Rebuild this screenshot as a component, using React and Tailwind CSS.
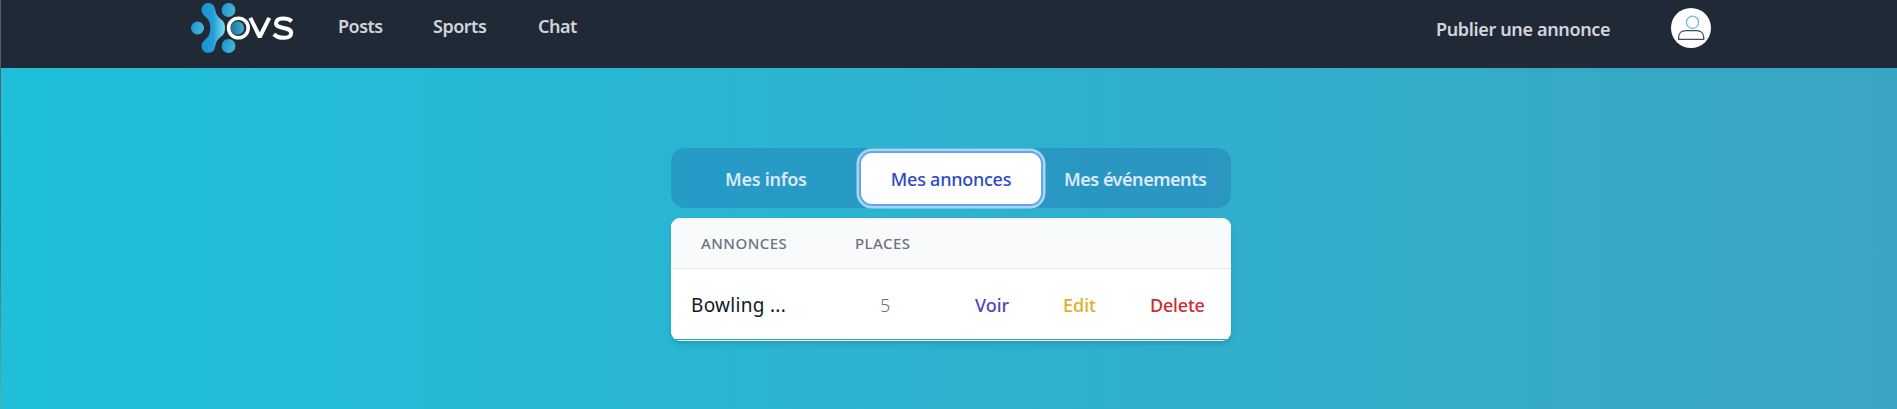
function Logo() {
  return (
    <svg className="block h-14 w-[110px]" viewBox="0 0 110 56">
      <defs>
        <linearGradient id="blue" x1="0" y1="0" x2="1" y2="0.3">
          <stop offset="0" stopColor="#1b93cf" />
          <stop offset="1" stopColor="#43b4d8" />
        </linearGradient>
        <linearGradient id="teal" x1="0" y1="0" x2="1" y2="0">
          <stop offset="0" stopColor="#1f6f9c" />
          <stop offset="1" stopColor="#3fb0cc" />
        </linearGradient>
        <linearGradient id="body" x1="0" y1="0" x2="1" y2="0">
          <stop offset="0" stopColor="#1c8fd0" />
          <stop offset="0.5" stopColor="#249fd6" />
          <stop offset="1" stopColor="#7fdcec" />
        </linearGradient>
      </defs>
      <circle cx="7.5" cy="28" r="6.5" fill="url(#blue)" />
      <circle cx="38.5" cy="10" r="6.9" fill="url(#blue)" />
      <circle cx="38.5" cy="46" r="6.9" fill="url(#blue)" />
      <path
        d="M11.5 10C11.5 2 22 .8 24.5 7C26 12 26 15 29.5 18C34 21 35 24 35 28C35 32 34 35 29.5 38C26 41 26 44 24.5 49C22 55 11.5 54 11.5 46C11.5 41 16 40 18.5 36C21 31 21 25 18.5 20C16 16 11.5 15 11.5 10Z"
        fill="url(#body)"
      />
      <circle cx="47.3" cy="28" r="6.8" fill="url(#teal)" />
      <circle cx="48.4" cy="28" r="9.8" fill="none" stroke="#fff" strokeWidth="3.6" />
      <path d="M60.3 17.8L69.7 37L79.3 17.8" fill="none" stroke="#fff" strokeWidth="4" strokeLinejoin="bevel" />
      <path
        d="M101.8 21.2C98 18 86.4 16.6 86 23.3C86 29.8 101.2 26 101.2 33C101 39.6 88.5 38.8 83.8 34.2"
        fill="none"
        stroke="#fff"
        strokeWidth="4"
      />
    </svg>
  );
}

function Avatar() {
  return (
    <svg className="block size-10" viewBox="0 0 40 40" fill="none">
      <circle cx="20" cy="20" r="20" fill="#fff" />
      <circle cx="21.5" cy="14.3" r="6.1" stroke="#6dbdd3" strokeWidth="1.3" />
      <path d="M7.6 31.4V29.5C7.6 25 11 22.6 15 22.6H25.5C30 22.6 32.7 25.5 32.7 29.5V31.4Z" stroke="#4d4a68" strokeWidth="1.3" />
    </svg>
  );
}

export default function App() {
  return (
    <div className="flex h-[409px] overflow-hidden font-['Noto_Sans','Open_Sans',sans-serif] text-[18px] leading-7">
      <div className="w-px shrink-0 bg-linear-to-b from-[#52665f] via-[#2e7266] to-[#55b39d]" />
      <div className="grow bg-linear-to-r/srgb from-[#1fbfdc] to-[#3aa5c3]">
        <header className="flex h-[68px] bg-[#202a37] pl-[189px] font-semibold text-[#d1d5db]">
          <Logo />
          <nav className="flex pt-3 tracking-[-0.5px]">
            <a className="ml-[38px] w-[95px]">Posts</a>
            <a className="w-[105px]">Sports</a>
            <a>Chat</a>
          </nav>
          <a className="ml-auto w-[235px] pt-[15px] tracking-[-0.35px] whitespace-nowrap">Publier une annonce</a>
          <div className="mr-[186px] pt-2">
            <Avatar />
          </div>
        </header>

        <main className="mt-20 ml-[670px] w-[560px]">
          <div className="grid h-[60px] grid-cols-3 gap-[4.5px] rounded-[14px] bg-[#2272b4]/40 p-[4.5px] text-center text-[#dbeafe]">
            <button className="pt-0.5 font-semibold tracking-[-0.25px]">Mes infos</button>
            <button className="rounded-[11px] bg-white pt-0.5 font-medium tracking-[-0.25px] text-[#2b4bc4] shadow-[0_0_0_2px_#60a5fa,0_0_0_4.5px_#a9d6ef]">
              Mes annonces
            </button>
            <button className="pt-0.5 pr-0.5 font-semibold tracking-[-0.45px] whitespace-nowrap">Mes événements</button>
          </div>
          <section className="mt-2.5 h-[123px] overflow-hidden rounded-[9px] bg-white shadow-md">
            <div className="flex h-[51px] items-center border-b border-[#e5e7eb] bg-[#f9fafb] pl-[30px] text-[15px] font-medium tracking-[0.45px] text-[#6b7280]">
              <span className="w-[154px]">ANNONCES</span>
              <span>PLACES</span>
            </div>
            <div className="flex h-[71px] items-center border-b border-[#2e9fb5] pt-0.5 font-medium">
              <span className="w-[189px] pl-5 text-[19px] font-normal tracking-[0.3px] text-[#111827]">Bowling ...</span>
              <span className="w-[115px] pl-5 font-light text-[#6b7280]">5</span>
              <a className="w-[88px] text-[#4f46c5]">Voir</a>
              <a className="w-[87px] text-[#e0b02a]">Edit</a>
              <a className="tracking-[-0.2px] text-[#cf2a30]">Delete</a>
            </div>
          </section>
        </main>
      </div>
    </div>
  );
}
